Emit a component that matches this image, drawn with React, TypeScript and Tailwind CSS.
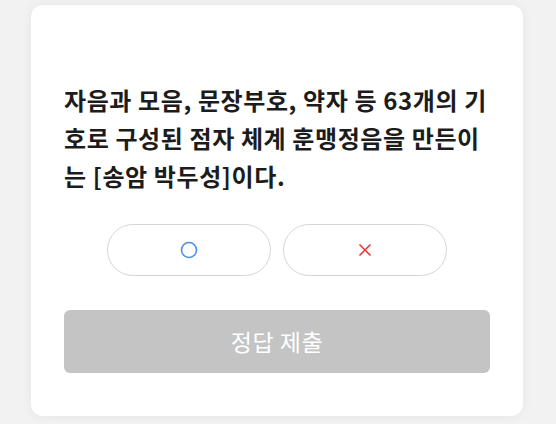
export default function App() {
  return (
    <div
      className="h-[424px] w-[556px] overflow-hidden bg-[#f2f2f2] pt-[5px] pl-[31px]"
      style={{ fontFamily: '"Noto Sans CJK KR", "Noto Sans", sans-serif' }}
    >
      <div className="flex h-[411px] w-[492px] flex-col rounded-xl bg-white px-[33px] pt-[76px] shadow-[0_0_12px_rgba(0,0,0,0.06)]">
        {/* QUESTION */}
        <p className="text-[24px] font-bold leading-[38px] tracking-[0.6px] break-all text-[#1c1c1c]">
          자음과 모음, 문장부호, 약자 등 63개의 기호로 구성된 점자 체계 훈맹정음을 만든이는 [송암 박두성]이다.
        </p>

        {/* O / X */}
        <div className="mt-[29px] flex justify-center gap-3">
          <button className="flex h-[52px] w-[164px] items-center justify-center rounded-full border border-[#d6d6d6] bg-white">
            <svg width="18" height="18" viewBox="0 0 18 18">
              <circle cx="9" cy="9" r="7.5" fill="none" stroke="#4a8fe7" strokeWidth="1.6" />
            </svg>
          </button>
          <button className="flex h-[52px] w-[164px] items-center justify-center rounded-full border border-[#d6d6d6] bg-white">
            <svg width="14" height="14" viewBox="0 0 14 14">
              <path d="M1.5 1.5L12.5 12.5M12.5 1.5L1.5 12.5" stroke="#e53935" strokeWidth="1.6" />
            </svg>
          </button>
        </div>

        {/* SUBMIT */}
        <button className="mt-[34px] h-[63px] w-full rounded-md bg-[#c4c4c4] text-[23px] tracking-[0.5px] text-white">
          정답 제출
        </button>
      </div>
    </div>
  );
}
